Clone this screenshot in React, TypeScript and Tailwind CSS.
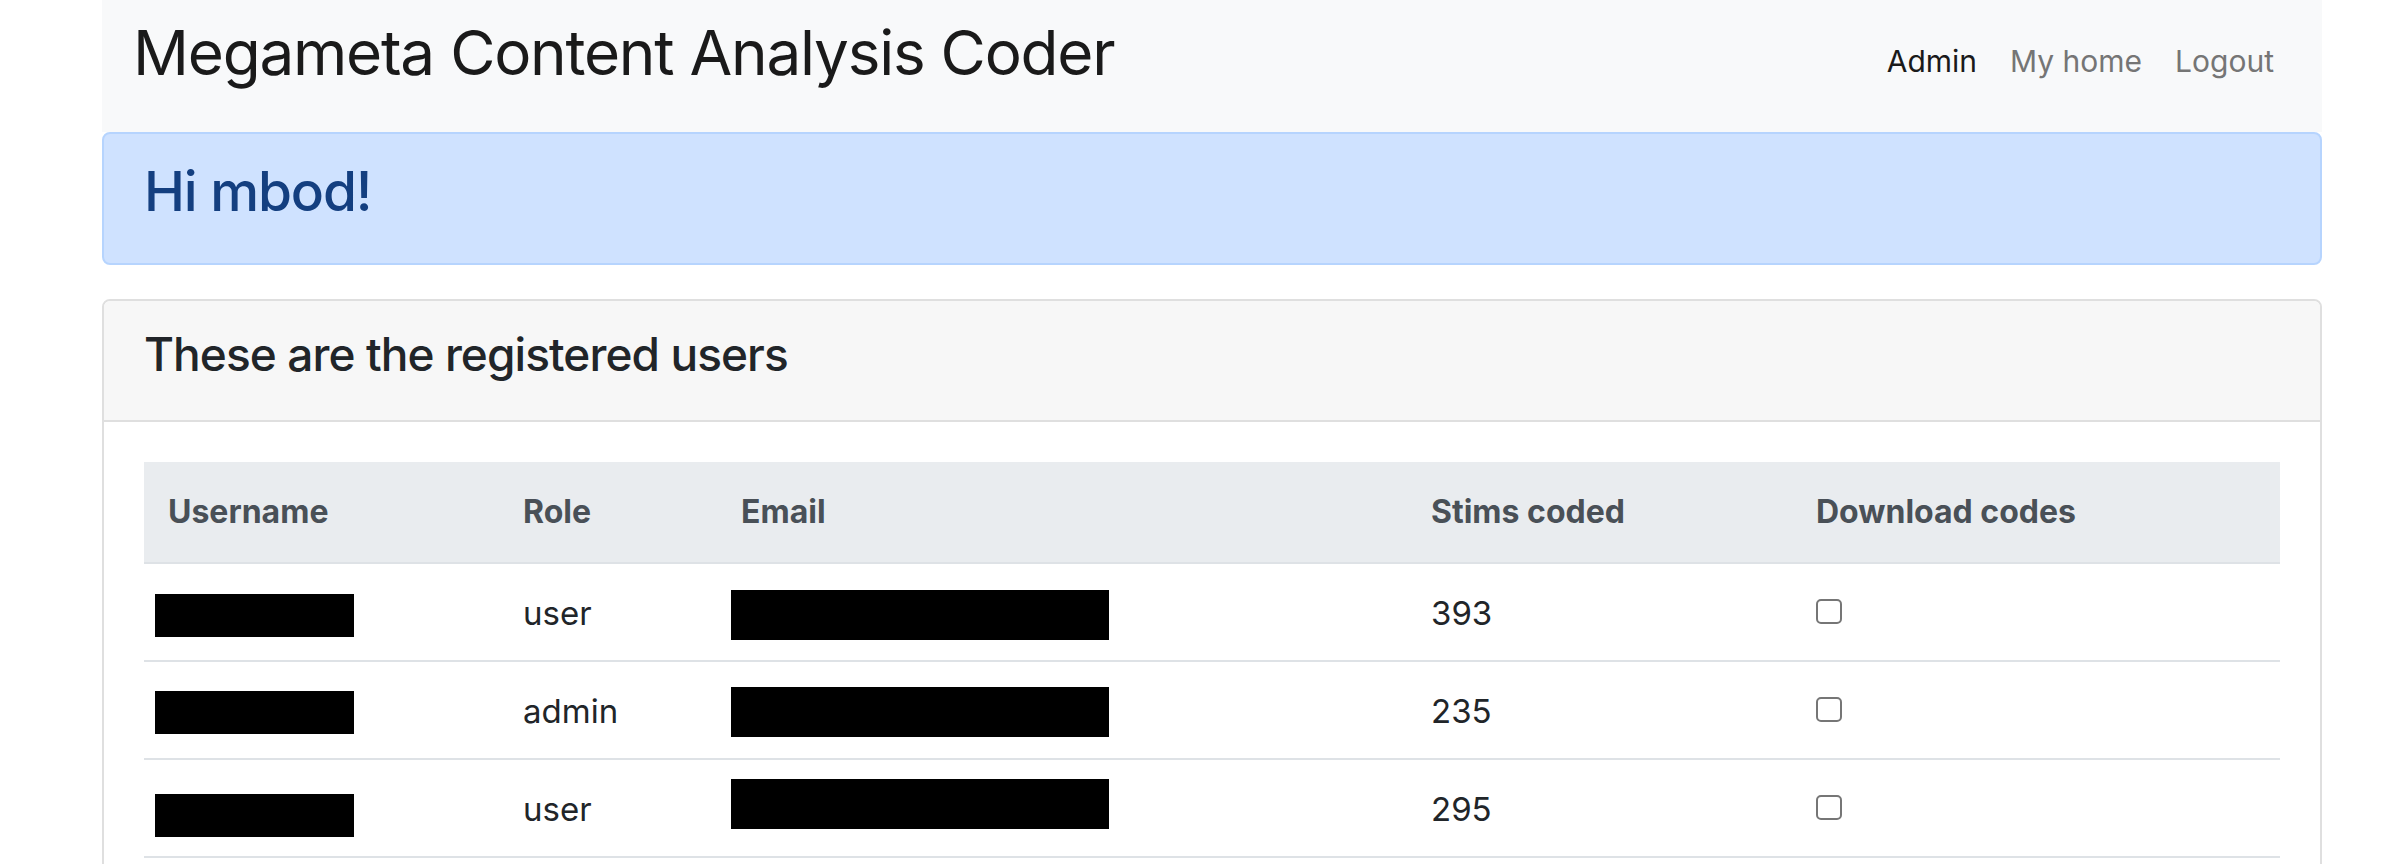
import React from 'react'

// Rows of the users table; the black blocks stand in for redacted names / emails
type UserRow = {
  role: string;
  stims: number;
  nameCls: string;
  emailCls: string;
}

const rows: UserRow[] = [
  { role: 'user', stims: 393, nameCls: '-mt-[3px] -mb-[7px]', emailCls: '-mt-[7px] -mb-[10px]' },
  { role: 'admin', stims: 235, nameCls: '-mt-[4px] -mb-[6px]', emailCls: '-mt-[8px] -mb-[9px]' },
  { role: 'user', stims: 295, nameCls: 'mt-[1px] -mb-[11px]', emailCls: '-mt-[14px] -mb-[3px]' },
]

function Navbar() {
  return (
    <div className="h-[132px] bg-[#f8f9fa] flex items-start pl-[31px] pr-[48px]">
      <div className="pt-[22px] text-[62px] leading-none tracking-[-0.02em] text-[#1a1a1a] whitespace-nowrap">
        Megameta Content Analysis Coder
      </div>
      <div className="ml-auto pt-[46px] flex gap-[33px] text-[30px] leading-none whitespace-nowrap">
        <a href="#" className="text-[#1a1a1a]">Admin</a>
        <a href="#" className="text-[#757575]">My home</a>
        <a href="#" className="text-[#757575]">Logout</a>
      </div>
    </div>
  )
}

export default function App() {
  return (
    <div className="min-h-screen bg-white font-['Inter','Liberation_Sans',sans-serif]">
      <div className="ml-[102px] w-[2220px]">
        <Navbar />

        {/* Greeting */}
        <div className="border-2 border-[#b6d4fe] bg-[#cfe2ff] rounded-[8px] pl-[40px] pt-[30px] pb-[44px]">
          <div className="text-[55px] leading-none font-medium tracking-[-0.02em] text-[#143f80]">Hi mbod!</div>
        </div>

        {/* Users card */}
        <div className="mt-[34px] border-2 border-[#dfdfdf] rounded-[8px]">
          <div className="bg-[#f7f7f7] rounded-t-[6px] border-b-2 border-[#dfdfdf] pl-[40px] pt-[30px] pb-[43px]">
            <div className="text-[46px] leading-none font-medium tracking-[-0.02em] text-[#212529]">These are the registered users</div>
          </div>
          <div className="px-[40px] pt-[40px] pb-[40px]">
            <table className="w-full table-fixed border-collapse">
              <colgroup>
                <col className="w-[355px]" />
                <col className="w-[218px]" />
                <col className="w-[690px]" />
                <col className="w-[385px]" />
                <col />
              </colgroup>
              <thead>
                <tr className="bg-[#e9ecef] text-[#495057] text-[32px] leading-none font-bold text-left">
                  <th className="pl-[24px] pt-[34px] pb-[34px] border-b-2 border-[#dee2e6]">Username</th>
                  <th className="pl-[24px] pt-[34px] pb-[34px] border-b-2 border-[#dee2e6]">Role</th>
                  <th className="pl-[24px] pt-[34px] pb-[34px] border-b-2 border-[#dee2e6]">Email</th>
                  <th className="pl-[24px] pt-[34px] pb-[34px] border-b-2 border-[#dee2e6]">Stims coded</th>
                  <th className="pl-[24px] pt-[34px] pb-[34px] border-b-2 border-[#dee2e6]">Download codes</th>
                </tr>
              </thead>
              <tbody className="text-[33px] leading-none text-[#212529]">
                {rows.map((r, i) => (
                  <tr key={i} className="border-b-2 border-[#dee2e6]">
                    <td className="pl-[24px] pt-[33px] pb-[30px] align-top">
                      <div className={`w-[199px] h-[43px] bg-black -ml-[13px] ${r.nameCls}`} />
                    </td>
                    <td className="pl-[24px] pt-[33px] pb-[30px] align-top">{r.role}</td>
                    <td className="pl-[24px] pt-[33px] pb-[30px] align-top">
                      <div className={`w-[378px] h-[50px] bg-black -ml-[10px] ${r.emailCls}`} />
                    </td>
                    <td className="pl-[24px] pt-[33px] pb-[30px] align-top">{r.stims}</td>
                    <td className="pl-[24px] pt-[33px] pb-[30px] align-top">
                      <input
                        type="checkbox"
                        className="appearance-none block w-[26px] h-[25px] mt-[2px] -mb-[2px] border-2 border-[#767676] rounded-[5px] bg-white"
                      />
                    </td>
                  </tr>
                ))}
              </tbody>
            </table>
          </div>
        </div>
      </div>
    </div>
  )
}
